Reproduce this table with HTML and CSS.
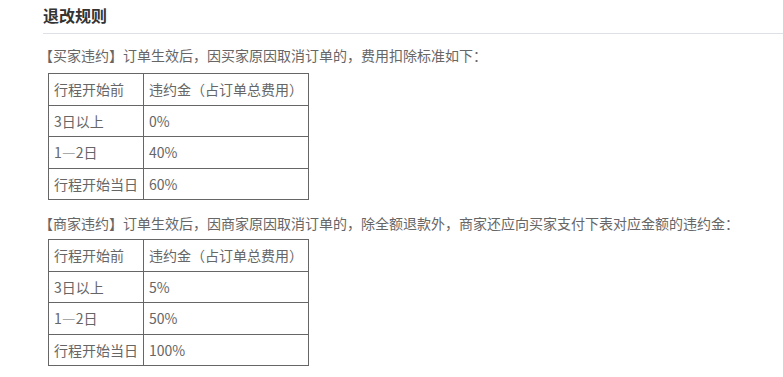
FILE: index.html
```html
<!DOCTYPE html>
<html lang="zh-CN">
<head>
<meta charset="utf-8">
<title>退改规则</title>
<link rel="stylesheet" href="styles.css">
</head>
<body>
<div class="rules">
  <h2 class="rules-title">退改规则</h2>
  <p class="rules-text">【买家违约】订单生效后，因买家原因取消订单的，费用扣除标准如下：</p>
  <table class="rules-table">
    <tr><td>行程开始前</td><td>违约金（占订单总费用）</td></tr>
    <tr><td>3日以上</td><td>0%</td></tr>
    <tr><td>1—2日</td><td>40%</td></tr>
    <tr><td>行程开始当日</td><td>60%</td></tr>
  </table>
  <p class="rules-text second">【商家违约】订单生效后，因商家原因取消订单的，除全额退款外，商家还应向买家支付下表对应金额的违约金：</p>
  <table class="rules-table">
    <tr><td>行程开始前</td><td>违约金（占订单总费用）</td></tr>
    <tr><td>3日以上</td><td>5%</td></tr>
    <tr><td>1—2日</td><td>50%</td></tr>
    <tr><td>行程开始当日</td><td>100%</td></tr>
  </table>
</div>
</body>
</html>
```
FILE: styles.css
```css
html, body {
  margin: 0;
  padding: 0;
  background: #fff;
}
body {
  font-family: "Noto Sans CJK SC", "Noto Sans", sans-serif;
  color: #666;
}
.rules {
  padding-left: 43px;
  padding-top: 5px;
}
.rules-title {
  margin: 0;
  font-size: 16px;
  font-weight: bold;
  line-height: 20px;
  color: #333;
  padding-bottom: 8px;
  border-bottom: 1px solid #dde1e6;
}
.rules-text {
  margin: 10px 0 0 -4px;
  font-size: 14px;
  line-height: 22px;
  white-space: nowrap;
}
.rules-text.second {
  margin-top: 12px;
}
.rules-table {
  border-collapse: collapse;
  margin: 7px 0 0 5px;
  font-size: 14px;
}
.rules-text.second + .rules-table {
  margin-top: 5px;
}
.rules-table td {
  border: 1px solid #666;
  padding: 4px 5px;
  line-height: 22.5px;
  white-space: nowrap;
  color: #666;
}
```
